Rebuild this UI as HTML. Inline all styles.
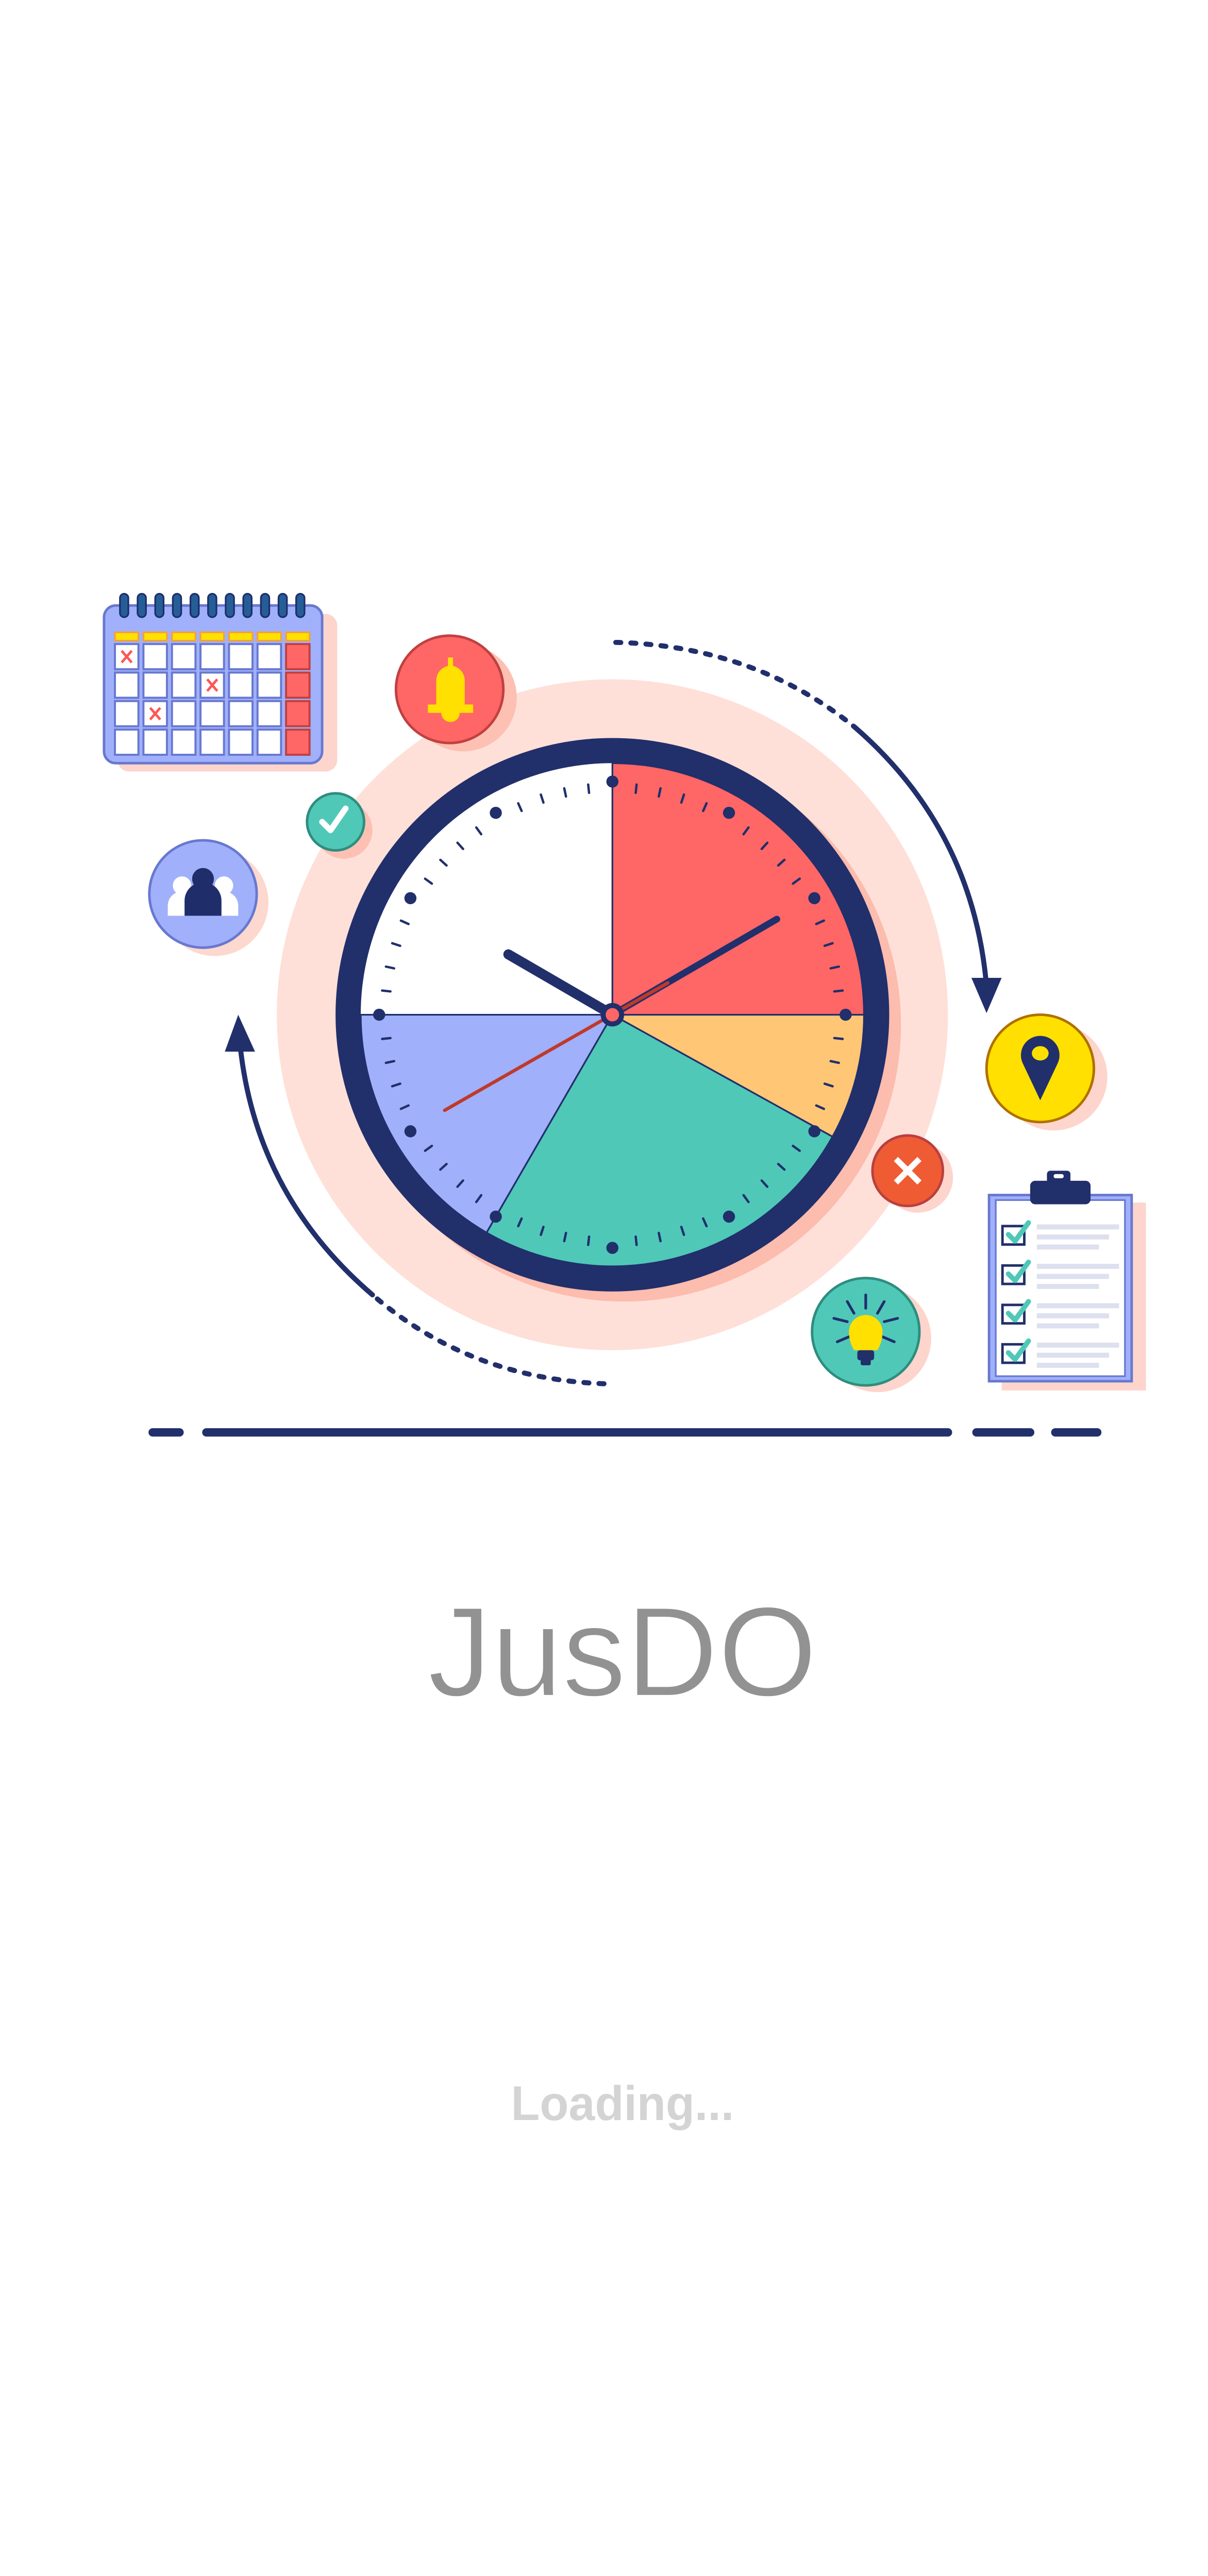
<!DOCTYPE html>
<html><head><meta charset="utf-8">
<style>
html,body{margin:0;padding:0;background:#fff;width:2344px;height:5064px;overflow:hidden;}
svg{display:block;}
</style></head>
<body>
<svg width="2344" height="5064" viewBox="0 0 720 1555.5" xmlns="http://www.w3.org/2000/svg">
<defs>
<line id="tk" x1="365" y1="467" x2="365" y2="472" stroke="#212f6b" stroke-width="1.4" stroke-linecap="round"/>
<circle id="hd" cx="365" cy="466" r="3.6" fill="#212f6b"/>
</defs>
<rect width="720" height="1555.5" fill="#fff"/>

<circle cx="365" cy="605" r="200" fill="#fee0d8"/>
<circle cx="372" cy="611" r="165" fill="#fcbcae"/>
<circle cx="365" cy="605" r="165" fill="#212f6b"/>
<circle cx="365" cy="605" r="150" fill="#fff"/>
<g stroke="#212f6b" stroke-width="1">
<path d="M365,605 L365,455 A150,150 0 0 1 515,605 Z" fill="#ff6666"/>
<path d="M365,605 L515,605 A150,150 0 0 1 496.2,677.7 Z" fill="#ffc676"/>
<path d="M365,605 L496.2,677.7 A150,150 0 0 1 290,734.9 Z" fill="#4fc8b8"/>
<path d="M365,605 L290,734.9 A150,150 0 0 1 215,605 Z" fill="#a0b0fa"/>
</g>
<g>
<use href="#tk" transform="rotate(6 365 605)"/><use href="#tk" transform="rotate(12 365 605)"/><use href="#tk" transform="rotate(18 365 605)"/><use href="#tk" transform="rotate(24 365 605)"/>
<use href="#tk" transform="rotate(36 365 605)"/><use href="#tk" transform="rotate(42 365 605)"/><use href="#tk" transform="rotate(48 365 605)"/><use href="#tk" transform="rotate(54 365 605)"/>
<use href="#tk" transform="rotate(66 365 605)"/><use href="#tk" transform="rotate(72 365 605)"/><use href="#tk" transform="rotate(78 365 605)"/><use href="#tk" transform="rotate(84 365 605)"/>
<use href="#tk" transform="rotate(96 365 605)"/><use href="#tk" transform="rotate(102 365 605)"/><use href="#tk" transform="rotate(108 365 605)"/><use href="#tk" transform="rotate(114 365 605)"/>
<use href="#tk" transform="rotate(126 365 605)"/><use href="#tk" transform="rotate(132 365 605)"/><use href="#tk" transform="rotate(138 365 605)"/><use href="#tk" transform="rotate(144 365 605)"/>
<use href="#tk" transform="rotate(156 365 605)"/><use href="#tk" transform="rotate(162 365 605)"/><use href="#tk" transform="rotate(168 365 605)"/><use href="#tk" transform="rotate(174 365 605)"/>
<use href="#tk" transform="rotate(186 365 605)"/><use href="#tk" transform="rotate(192 365 605)"/><use href="#tk" transform="rotate(198 365 605)"/><use href="#tk" transform="rotate(204 365 605)"/>
<use href="#tk" transform="rotate(216 365 605)"/><use href="#tk" transform="rotate(222 365 605)"/><use href="#tk" transform="rotate(228 365 605)"/><use href="#tk" transform="rotate(234 365 605)"/>
<use href="#tk" transform="rotate(246 365 605)"/><use href="#tk" transform="rotate(252 365 605)"/><use href="#tk" transform="rotate(258 365 605)"/><use href="#tk" transform="rotate(264 365 605)"/>
<use href="#tk" transform="rotate(276 365 605)"/><use href="#tk" transform="rotate(282 365 605)"/><use href="#tk" transform="rotate(288 365 605)"/><use href="#tk" transform="rotate(294 365 605)"/>
<use href="#tk" transform="rotate(306 365 605)"/><use href="#tk" transform="rotate(312 365 605)"/><use href="#tk" transform="rotate(318 365 605)"/><use href="#tk" transform="rotate(324 365 605)"/>
<use href="#tk" transform="rotate(336 365 605)"/><use href="#tk" transform="rotate(342 365 605)"/><use href="#tk" transform="rotate(348 365 605)"/><use href="#tk" transform="rotate(354 365 605)"/>
</g>
<g>
<use href="#hd"/><use href="#hd" transform="rotate(30 365 605)"/><use href="#hd" transform="rotate(60 365 605)"/><use href="#hd" transform="rotate(90 365 605)"/>
<use href="#hd" transform="rotate(120 365 605)"/><use href="#hd" transform="rotate(150 365 605)"/><use href="#hd" transform="rotate(180 365 605)"/><use href="#hd" transform="rotate(210 365 605)"/>
<use href="#hd" transform="rotate(240 365 605)"/><use href="#hd" transform="rotate(270 365 605)"/><use href="#hd" transform="rotate(300 365 605)"/><use href="#hd" transform="rotate(330 365 605)"/>
</g>
<line x1="365" y1="605" x2="303" y2="569" stroke="#212f6b" stroke-width="6" stroke-linecap="round"/>
<line x1="365" y1="605" x2="463" y2="548" stroke="#212f6b" stroke-width="4" stroke-linecap="round"/>
<line x1="265" y1="662" x2="398" y2="586" stroke="#c0392b" stroke-width="2" stroke-linecap="round"/>
<circle cx="365" cy="605" r="7" fill="#212f6b"/>
<circle cx="365" cy="605" r="4" fill="#ff6666"/>

<path d="M367,383 Q450,385 510,434" fill="none" stroke="#212f6b" stroke-width="3" stroke-dasharray="3,6" stroke-linecap="round"/>
<path d="M510,434 Q580,495 588,588" fill="none" stroke="#212f6b" stroke-width="3" stroke-linecap="round"/>
<path d="M579,583 L597,583 L588,604 Z" fill="#212f6b"/>
<path d="M360,825 Q280,822 222,772" fill="none" stroke="#212f6b" stroke-width="3" stroke-dasharray="3,6" stroke-linecap="round"/>
<path d="M222,772 Q152,712 143,622" fill="none" stroke="#212f6b" stroke-width="3" stroke-linecap="round"/>
<path d="M134,627 L152,627 L142,605 Z" fill="#212f6b"/>

<g stroke="#212f6b" stroke-width="5" stroke-linecap="round">
<line x1="91" y1="854" x2="107" y2="854"/><line x1="123" y1="854" x2="565" y2="854"/>
<line x1="582" y1="854" x2="614" y2="854"/><line x1="629" y1="854" x2="654" y2="854"/>
</g>

<rect x="70" y="366" width="131" height="94" rx="7" fill="#fdd5cc"/>
<rect x="62" y="361" width="130" height="94" rx="7" fill="#a0b0fa" stroke="#6878d0" stroke-width="1.5"/>
<g fill="#255e96" stroke="#1f2e6b" stroke-width="1">
<rect x="71.5" y="354" width="5" height="14" rx="2.5"/><rect x="82" y="354" width="5" height="14" rx="2.5"/><rect x="92.5" y="354" width="5" height="14" rx="2.5"/><rect x="103" y="354" width="5" height="14" rx="2.5"/><rect x="113.5" y="354" width="5" height="14" rx="2.5"/><rect x="124" y="354" width="5" height="14" rx="2.5"/><rect x="134.5" y="354" width="5" height="14" rx="2.5"/><rect x="145" y="354" width="5" height="14" rx="2.5"/><rect x="155.5" y="354" width="5" height="14" rx="2.5"/><rect x="166" y="354" width="5" height="14" rx="2.5"/><rect x="176.5" y="354" width="5" height="14" rx="2.5"/>
</g>
<g fill="#ffe000" stroke="#f2a03c" stroke-width="1">
<rect x="68.5" y="377" width="14" height="5"/><rect x="85.5" y="377" width="14" height="5"/><rect x="102.5" y="377" width="14" height="5"/><rect x="119.5" y="377" width="14" height="5"/><rect x="136.5" y="377" width="14" height="5"/><rect x="153.5" y="377" width="14" height="5"/><rect x="170.5" y="377" width="14" height="5"/>
</g>
<g fill="#fff" stroke="#6878d0" stroke-width="1.2">
<rect x="68.5" y="384" width="14" height="15"/><rect x="85.5" y="384" width="14" height="15"/><rect x="102.5" y="384" width="14" height="15"/><rect x="119.5" y="384" width="14" height="15"/><rect x="136.5" y="384" width="14" height="15"/><rect x="153.5" y="384" width="14" height="15"/>
<rect x="68.5" y="401" width="14" height="15"/><rect x="85.5" y="401" width="14" height="15"/><rect x="102.5" y="401" width="14" height="15"/><rect x="119.5" y="401" width="14" height="15"/><rect x="136.5" y="401" width="14" height="15"/><rect x="153.5" y="401" width="14" height="15"/>
<rect x="68.5" y="418" width="14" height="15"/><rect x="85.5" y="418" width="14" height="15"/><rect x="102.5" y="418" width="14" height="15"/><rect x="119.5" y="418" width="14" height="15"/><rect x="136.5" y="418" width="14" height="15"/><rect x="153.5" y="418" width="14" height="15"/>
<rect x="68.5" y="435" width="14" height="15"/><rect x="85.5" y="435" width="14" height="15"/><rect x="102.5" y="435" width="14" height="15"/><rect x="119.5" y="435" width="14" height="15"/><rect x="136.5" y="435" width="14" height="15"/><rect x="153.5" y="435" width="14" height="15"/>
</g>
<g fill="#ff6666" stroke="#c04040" stroke-width="1.2">
<rect x="170.5" y="384" width="14" height="15"/><rect x="170.5" y="401" width="14" height="15"/><rect x="170.5" y="418" width="14" height="15"/><rect x="170.5" y="435" width="14" height="15"/>
</g>
<g stroke="#ff5555" stroke-width="1.5">
<path d="M72.5,388 L78.5,395 M78.5,388 L72.5,395"/>
<path d="M123.5,405 L129.5,412 M129.5,405 L123.5,412"/>
<path d="M89.5,422 L95.5,429 M95.5,422 L89.5,429"/>
</g>

<circle cx="276" cy="416" r="32" fill="#fdc0b2"/>
<circle cx="268" cy="411" r="32" fill="#ff6666" stroke="#c04040" stroke-width="1.5"/>
<path d="M267,392 h3 v5 a9,9 0 0 1 7,9 v14 h5 v5 h-8 a5.5,5.5 0 0 1 -11,0 h-8 v-5 h5 v-14 a9,9 0 0 1 7,-9 Z" fill="#ffe000"/>

<circle cx="205" cy="495" r="17" fill="#fdc0b2"/>
<circle cx="200" cy="490" r="17" fill="#4fc8b8" stroke="#2e8d7e" stroke-width="1.5"/>
<path d="M192,490 L197,495 L206,482" fill="none" stroke="#fff" stroke-width="3.5" stroke-linecap="round" stroke-linejoin="round"/>

<circle cx="128" cy="538" r="32" fill="#fdd8cf"/>
<circle cx="121" cy="533" r="32" fill="#a0b0fa" stroke="#6878d0" stroke-width="1.5"/>
<circle cx="108.5" cy="528" r="5.5" fill="#fff"/><path d="M100,546 v-6 a8.5,8.5 0 0 1 17,0 v6 Z" fill="#fff"/>
<circle cx="133.5" cy="528" r="5.5" fill="#fff"/><path d="M125,546 v-6 a8.5,8.5 0 0 1 17,0 v6 Z" fill="#fff"/>
<circle cx="121" cy="524" r="6.5" fill="#1f2e6b"/><path d="M110,546 v-9 a11,11 0 0 1 22,0 v9 Z" fill="#1f2e6b"/>

<circle cx="628" cy="642" r="32" fill="#fdd5cc"/>
<circle cx="620" cy="637" r="32" fill="#ffe000" stroke="#b07000" stroke-width="1.5"/>
<path d="M620,656 L609.6,634 A11.5,11.5 0 1 1 630.4,634 Z" fill="#212f6b"/>
<ellipse cx="620" cy="628" rx="5" ry="4.3" fill="#ffe000"/>

<circle cx="547" cy="702" r="21" fill="#fdd5cc"/>
<circle cx="541" cy="698" r="21" fill="#ef5b33" stroke="#b94040" stroke-width="1.5"/>
<path d="M534,691 L548,705 M548,691 L534,705" stroke="#fff" stroke-width="3.5"/>

<circle cx="523" cy="798" r="32" fill="#fdd5cc"/>
<circle cx="516" cy="794" r="32" fill="#4fc8b8" stroke="#2e8d7e" stroke-width="1.5"/>
<g stroke="#212f6b" stroke-width="1.6" stroke-linecap="round">
<line x1="516" y1="772" x2="516" y2="780"/><line x1="505" y1="776" x2="509" y2="783"/><line x1="527" y1="776" x2="523" y2="783"/>
<line x1="497" y1="786" x2="505" y2="788"/><line x1="535" y1="786" x2="527" y2="788"/>
<line x1="499" y1="800" x2="506" y2="797"/><line x1="533" y1="800" x2="526" y2="797"/>
</g>
<path d="M509,805 Q506,800 506,794 a10,10 0 0 1 20,0 q0,6 -3,11 Z" fill="#ffe000"/>
<rect x="511" y="805" width="10" height="6" rx="1.5" fill="#212f6b"/><rect x="513" y="810" width="6" height="4" rx="1" fill="#212f6b"/>

<rect x="597" y="717" width="86" height="112" fill="#fdd5cc"/>
<rect x="589.5" y="712.5" width="85" height="111" fill="#a0b0fa" stroke="#6878d0" stroke-width="1.5"/>
<rect x="593.5" y="715.5" width="77" height="105" fill="#fff" stroke="#6878d0" stroke-width="1"/>
<rect x="624" y="698" width="14" height="10" rx="2" fill="#212f6b"/><rect x="628" y="700" width="6" height="2.5" rx="1.2" fill="#fff"/>
<rect x="614" y="704" width="36" height="14" rx="3" fill="#212f6b"/>
<g fill="#fff" stroke="#212f6b" stroke-width="1.5">
<rect x="597.5" y="731" width="13" height="11"/><rect x="597.5" y="754.5" width="13" height="11"/><rect x="597.5" y="778" width="13" height="11"/><rect x="597.5" y="801.5" width="13" height="11"/>
</g>
<g fill="none" stroke="#4fc8b8" stroke-width="3" stroke-linecap="round" stroke-linejoin="round">
<path d="M601,736 L605,740 L613,729"/><path d="M601,759.5 L605,763.5 L613,752.5"/><path d="M601,783 L605,787 L613,776"/><path d="M601,806.5 L605,810.5 L613,799.5"/>
</g>
<g fill="#dde0ef">
<rect x="618" y="730" width="49" height="3"/><rect x="618" y="736" width="43" height="3"/><rect x="618" y="742" width="37" height="3"/>
<rect x="618" y="753.5" width="49" height="3"/><rect x="618" y="759.5" width="43" height="3"/><rect x="618" y="765.5" width="37" height="3"/>
<rect x="618" y="777" width="49" height="3"/><rect x="618" y="783" width="43" height="3"/><rect x="618" y="789" width="37" height="3"/>
<rect x="618" y="800.5" width="49" height="3"/><rect x="618" y="806.5" width="43" height="3"/><rect x="618" y="812.5" width="37" height="3"/>
</g>

<text x="371" y="1011" text-anchor="middle" font-family="Liberation Sans, sans-serif" font-size="76" fill="#929292" stroke="#fff" stroke-width="0.8" paint-order="stroke" textLength="232" lengthAdjust="spacingAndGlyphs">JusDO</text>
<text x="371" y="1011" text-anchor="middle" font-family="Liberation Sans, sans-serif" font-size="76" fill="none" stroke="#fff" stroke-width="0.9" textLength="232" lengthAdjust="spacingAndGlyphs">JusDO</text>
<text x="371" y="1264" text-anchor="middle" font-family="Liberation Sans, sans-serif" font-weight="bold" font-size="29" fill="#d4d4d4" textLength="133" lengthAdjust="spacingAndGlyphs">Loading...</text>
</svg>
</body></html>
